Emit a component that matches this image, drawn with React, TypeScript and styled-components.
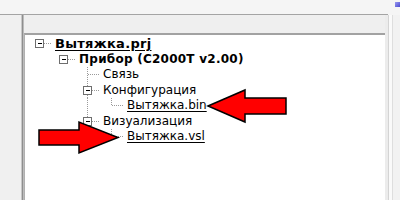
import React from "react";
import styled, { createGlobalStyle } from "styled-components";

const GlobalStyle = createGlobalStyle`
  html, body { margin: 0; padding: 0; }
  body { width: 400px; height: 200px; overflow: hidden; background: #f0f0f0; }
`;

const Window = styled.div`
  position: relative;
  width: 400px;
  height: 200px;
  display: flex;
  flex-direction: column;
  background: #f0f0f0;
  font-family: "DejaVu Sans", Verdana, sans-serif;
`;

const TopStrip = styled.div`
  height: 14px;
  flex: none;
  background:
    linear-gradient(to right, #a4a4a4 388px, transparent 388px) left bottom / 100% 1px no-repeat,
    #f5f5f5;
  padding-bottom: 1px;
`;

const Badge = styled.div`
  position: absolute;
  top: 2px;
  right: 0;
  width: 5px;
  height: 5px;
  background: linear-gradient(135deg, #9a9af0, #4a4ad0);
`;

const Body = styled.div`
  flex: 1;
  display: flex;
  min-height: 0;
`;

const LeftPane = styled.div`
  width: 22px;
  flex: none;
  background: #f0f0f0;
  border-right: 1px solid #8e8e8e;
  box-shadow: inset -1px 0 0 #c8c8c8;
`;

const Main = styled.div`
  flex: 1;
  display: flex;
  flex-direction: column;
  min-width: 0;
  border-left: 1px solid #bcbcbc;
`;

const HeaderBand = styled.div`
  height: 18px;
  flex: none;
  background: #efefef;
`;

const TreePanel = styled.div`
  flex: 1;
  background: #ffffff;
  border-top: 2px solid #a2a2a2;
  border-left: 1px solid #b0b0b0;
  padding: 1px 0 0 3px;
`;

const RightStrip = styled.div`
  width: 15px;
  flex: none;
  background:
    linear-gradient(to right, #ececec 0 3px, #d4d4d4 3px 4px, #fafafa 4px 7px, #dedede 7px 8px, #f2f2f2 8px);
`;

const Row = styled.div`
  display: flex;
  align-items: stretch;
  height: 15.5px;
`;

const Gutter = styled.svg`
  width: 24px;
  height: 15.5px;
  flex: none;
  display: block;
`;

type Weight = "root" | "bold" | "normal";

const Label = styled.span<{ $weight: Weight; $link?: boolean }>`
  margin-left: 3px;
  font-size: ${(p) => (p.$weight === "root" ? "13px" : "12px")};
  letter-spacing: ${(p) => (p.$weight === "root" ? "0.3px" : p.$weight === "bold" ? "0.25px" : "0")};
  line-height: 15.5px;
  white-space: nowrap;
  color: #000;
  font-weight: ${(p) => (p.$weight === "normal" ? 400 : 700)};
  text-decoration: ${(p) => (p.$link ? "underline" : "none")};
  text-underline-offset: 2px;
`;

const Overlay = styled.svg`
  position: absolute;
  left: 0;
  top: 0;
  width: 400px;
  height: 200px;
  pointer-events: none;
`;

type Cell = "blank" | "pipe" | "tee" | "elbow" | "boxSolo" | "boxMid" | "boxLast";

const DOT = { stroke: "#9a9a9a", strokeWidth: 1, strokeDasharray: "1 1" };

function GuideCell({ kind }: { kind: Cell }) {
  const cx = 11.5;
  const cy = 7.5;
  const box = kind === "boxSolo" || kind === "boxMid" || kind === "boxLast";
  return (
    <Gutter viewBox="0 0 24 15.5" shapeRendering="crispEdges">
      {(kind === "pipe" || kind === "tee") && <line x1={cx} y1={0} x2={cx} y2={15.5} {...DOT} />}
      {kind === "elbow" && <line x1={cx} y1={0} x2={cx} y2={cy} {...DOT} />}
      {(kind === "tee" || kind === "elbow") && <line x1={cx} y1={cy} x2={24} y2={cy} {...DOT} />}
      {(kind === "boxMid" || kind === "boxLast") && <line x1={cx} y1={0} x2={cx} y2={3} {...DOT} />}
      {kind === "boxMid" && <line x1={cx} y1={12} x2={cx} y2={15.5} {...DOT} />}
      {box && (
        <>
          <line x1={16} y1={cy} x2={24} y2={cy} {...DOT} />
          <rect x={7.5} y={3.5} width={8} height={8} fill="#fff" stroke="#6e6e6e" strokeWidth={1} />
          <line x1={9.5} y1={cy} x2={14} y2={cy} stroke="#000" strokeWidth={1} />
        </>
      )}
    </Gutter>
  );
}

type Node = { label: string; cells: Cell[]; weight: Weight; link?: boolean };

const nodes: Node[] = [
  { label: "Вытяжка.prj", cells: ["boxSolo"], weight: "root", link: true },
  { label: "Прибор (C2000T v2.00)", cells: ["blank", "boxSolo"], weight: "bold" },
  { label: "Связь", cells: ["blank", "blank", "tee"], weight: "normal" },
  { label: "Конфигурация", cells: ["blank", "blank", "boxMid"], weight: "normal" },
  { label: "Вытяжка.bin", cells: ["blank", "blank", "pipe", "elbow"], weight: "normal", link: true },
  { label: "Визуализация", cells: ["blank", "blank", "boxLast"], weight: "normal" },
  { label: "Вытяжка.vsl", cells: ["blank", "blank", "blank", "elbow"], weight: "normal", link: true },
];

export default function App() {
  return (
    <>
      <GlobalStyle />
      <Window>
        <TopStrip />
        <Badge />
        <Body>
          <LeftPane />
          <Main>
            <HeaderBand />
            <TreePanel>
              {nodes.map((n) => (
                <Row key={n.label}>
                  {n.cells.map((c, i) => (
                    <GuideCell key={i} kind={c} />
                  ))}
                  <Label $weight={n.weight} $link={n.link}>
                    {n.label}
                  </Label>
                </Row>
              ))}
            </TreePanel>
          </Main>
          <RightStrip />
        </Body>
        <Overlay viewBox="0 0 400 200">
          <polygon
            points="39,130 79,130 79,122 118,137.5 79,153 79,145 39,145"
            fill="#ff0000"
            stroke="#000"
            strokeWidth={1.5}
            strokeLinejoin="miter"
          />
          <polygon
            points="208,106 245,90 245,98 286,98 286,114 245,114 245,122"
            fill="#ff0000"
            stroke="#000"
            strokeWidth={1.5}
            strokeLinejoin="miter"
          />
        </Overlay>
      </Window>
    </>
  );
}
